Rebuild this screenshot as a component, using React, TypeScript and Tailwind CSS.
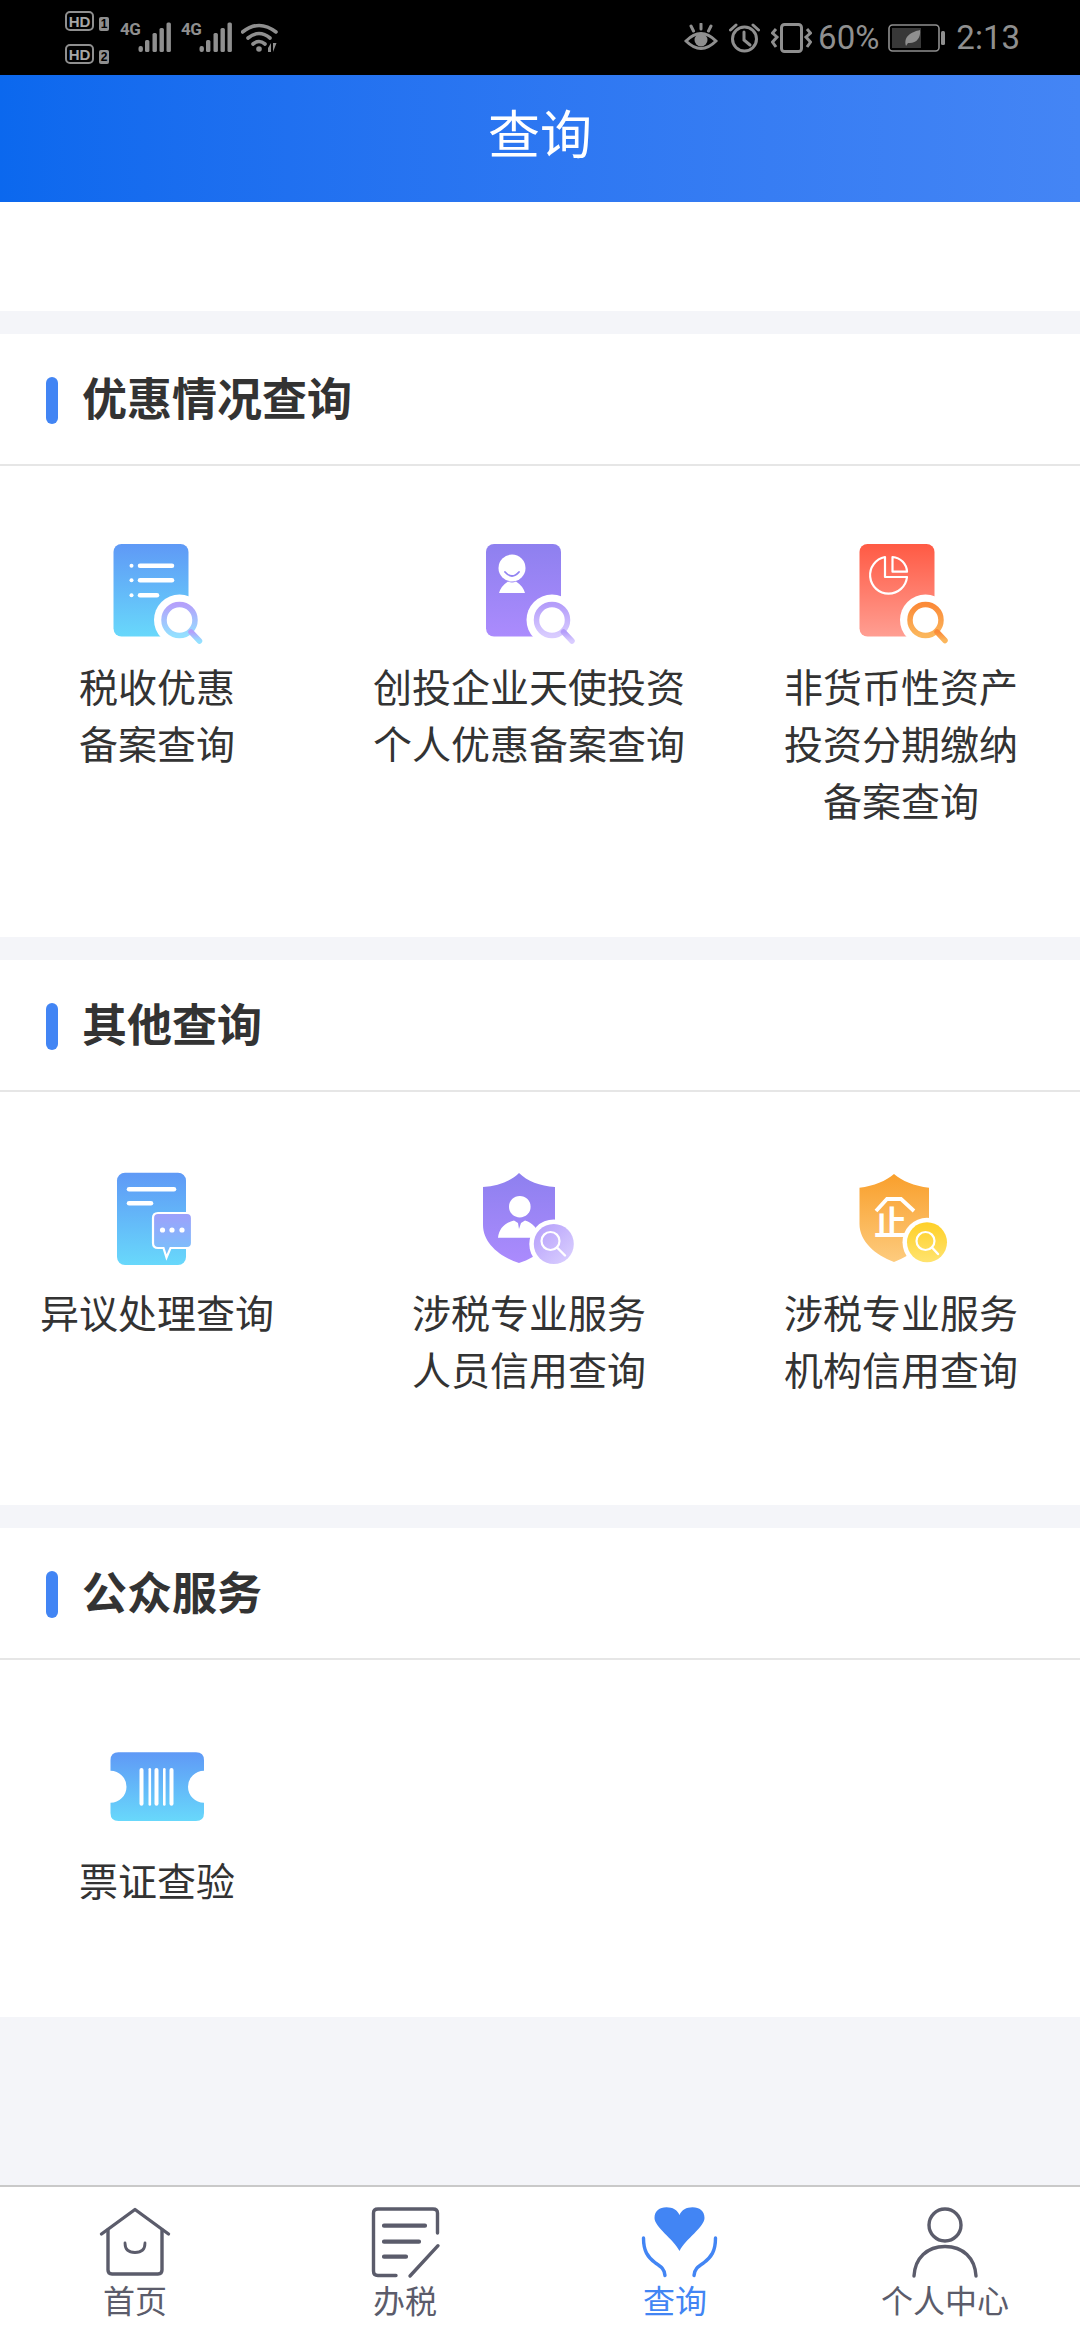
import React from "react";

const GRAY = "#8f8f8f";

function Grad({ id, from, to, x2 = 0, y2 = 1 }: { id: string; from: string; to: string; x2?: number; y2?: number }) {
  return (
    <linearGradient id={id} x1="0" y1="0" x2={x2} y2={y2}>
      <stop offset="0" stopColor={from} />
      <stop offset="1" stopColor={to} />
    </linearGradient>
  );
}

function Magnifier({ cx, cy, ex, ey, id }: { cx: number; cy: number; ex: number; ey: number; id: string }) {
  return (
    <g>
      <circle cx={cx} cy={cy} r="25.5" fill="#fff" />
      <circle cx={cx} cy={cy} r="15.5" fill="#fff" stroke={`url(#${id})`} strokeWidth="5.5" />
      <line x1={cx + 11.5} y1={cy + 12} x2={ex} y2={ey} stroke={`url(#${id})`} strokeWidth="5.5" strokeLinecap="round" />
    </g>
  );
}

function IconBase({ children }: { children: React.ReactNode }) {
  return (
    <svg width="105" height="105" viewBox="0 0 105 105" className="block">
      {children}
    </svg>
  );
}

function IconList() {
  return (
    <IconBase>
      <defs>
        <Grad id="a1" from="#5f99f6" to="#68d8fb" />
        <Grad id="a2" from="#b4a0fb" to="#94e0ff" />
      </defs>
      <rect x="8.5" y="1" width="75" height="92.5" rx="8" fill="url(#a1)" />
      <g stroke="#fff" strokeWidth="4.5" strokeLinecap="round">
        <line x1="35" y1="22.7" x2="67" y2="22.7" />
        <line x1="35" y1="37.3" x2="67" y2="37.3" />
        <line x1="35" y1="52.3" x2="52" y2="52.3" />
      </g>
      <g fill="#fff">
        <circle cx="26.5" cy="22.7" r="2" />
        <circle cx="26.5" cy="37.3" r="2" />
        <circle cx="26.5" cy="52.3" r="2" />
      </g>
      <Magnifier cx={74.5} cy={77} ex={94.5} ey={98} id="a2" />
    </IconBase>
  );
}

function IconPerson() {
  return (
    <IconBase>
      <defs>
        <Grad id="b1" from="#8e80ef" to="#ab8bfd" />
        <Grad id="b2" from="#b49dfa" to="#d9ccff" />
      </defs>
      <g transform="translate(1 0)">
        <rect x="8" y="1" width="75" height="92.5" rx="8" fill="url(#b1)" />
        <circle cx="34" cy="25" r="13.5" fill="#fff" />
        <path d="M27 29 Q34 37 41 29" fill="none" stroke="#9283f2" strokeWidth="1.8" strokeLinecap="round" />
        <path d="M21 50 Q23 43 30 38.5 Q34 40.5 38 38.5 Q45 43 47 50 Z" fill="#fff" />
        <Magnifier cx={74} cy={77} ex={94} ey={98} id="b2" />
      </g>
    </IconBase>
  );
}

function IconPie() {
  return (
    <IconBase>
      <defs>
        <Grad id="c1" from="#ff5a44" to="#ff9e92" />
        <Grad id="c2" from="#fb8a38" to="#fbb65c" />
      </defs>
      <rect x="10.5" y="1" width="75" height="92.5" rx="8" fill="url(#c1)" />
      <g fill="none" stroke="#fff" strokeWidth="2.2" strokeLinejoin="round">
        <path d="M36 14 A18.5 18.5 0 1 0 58 34 L36 34 Z" />
        <path d="M43.5 14 A15.5 15.5 0 0 1 58 28.7 L43.5 28.7 Z" />
      </g>
      <Magnifier cx={76.5} cy={77} ex={96} ey={97.5} id="c2" />
    </IconBase>
  );
}

function IconChat() {
  return (
    <IconBase>
      <defs>
        <Grad id="d1" from="#5f99f6" to="#68d8fb" />
        <Grad id="d2" from="#9e9ffb" to="#74c5fb" />
      </defs>
      <rect x="12" y="3.7" width="69" height="92.3" rx="8" fill="url(#d1)" />
      <g stroke="#fff" strokeWidth="4.5" strokeLinecap="round">
        <line x1="24" y1="20.3" x2="69" y2="20.3" />
        <line x1="24" y1="34.3" x2="46" y2="34.3" />
      </g>
      <path
        d="M53 44 H82 Q87 44 87 49 V74 Q87 79 82 79 H65.5 L61.5 88.5 L58.5 79 H53 Q48 79 48 74 V49 Q48 44 53 44 Z"
        fill="url(#d2)"
        stroke="#fff"
        strokeWidth="2.2"
      />
      <g fill="#fff">
        <circle cx="57.5" cy="61" r="2.6" />
        <circle cx="67" cy="61" r="2.6" />
        <circle cx="77" cy="61" r="2.6" />
      </g>
    </IconBase>
  );
}

function IconShieldPerson() {
  return (
    <IconBase>
      <defs>
        <Grad id="e1" from="#8e80ef" to="#ab8bfd" />
        <Grad id="e2" from="#b49dfa" to="#dcd2ff" x2={1} />
      </defs>
      <g transform="translate(1 0)">
        <path d="M41 4 C33 12 20 17 5 18 L5 56 C5 74 22 88 41 94 C60 88 77 74 77 56 L77 18 C62 17 49 12 41 4 Z" fill="url(#e1)" />
        <circle cx="41.8" cy="37.7" r="10.8" fill="#fff" />
        <path d="M20 68.7 C21 60 26 54 36 51.5 L40 54 L41 60 L43 54 L47 51.5 C55 54 60 60 62 68.7 Z" fill="#fff" />
        <circle cx="75.8" cy="75" r="24.5" fill="#fff" />
        <circle cx="75.8" cy="75" r="20" fill="url(#e2)" />
        <circle cx="72.5" cy="72" r="9" fill="none" stroke="#fff" strokeWidth="2.2" />
        <line x1="79" y1="78.5" x2="87" y2="86.5" stroke="#fff" strokeWidth="2.4" strokeLinecap="round" />
      </g>
    </IconBase>
  );
}

function IconShieldOrg() {
  return (
    <IconBase>
      <defs>
        <Grad id="f1" from="#f99f2c" to="#fdcb7e" />
        <Grad id="f2" from="#ffd027" to="#ffe36f" />
      </defs>
      <path d="M45 5 C37 12 25 17 10.5 18.7 L10.5 55 C10.5 72 26 86 45 93 C64 86 80 72 80 55 L80 18.7 C65 17 53 12 45 5 Z" fill="url(#f1)" />
      <polyline points="27,42 38,30 52,30 65,42" fill="none" stroke="#fff" strokeWidth="3.8" />
      <text
        x="41.5"
        y="66"
        textAnchor="middle"
        fontSize="33"
        fontWeight="700"
        fill="#fff"
        fontFamily="'Noto Sans CJK SC', sans-serif"
      >
        止
      </text>
      <circle cx="78" cy="73.3" r="24.5" fill="#fff" />
      <circle cx="78" cy="73.3" r="20" fill="url(#f2)" />
      <circle cx="76.5" cy="72" r="9" fill="none" stroke="#fff" strokeWidth="2.2" />
      <line x1="83" y1="78.5" x2="89" y2="85" stroke="#fff" strokeWidth="2.4" strokeLinecap="round" />
    </IconBase>
  );
}

function IconTicket() {
  return (
    <IconBase>
      <defs>
        <Grad id="g1" from="#5f99f6" to="#68d8fb" />
      </defs>
      <path
        d="M13.5 15.3 H91 Q99 15.3 99 23.3 V33.7 A16 16 0 0 0 99 65.7 V76 Q99 84 91 84 H13.5 Q5.5 84 5.5 76 V65.7 A16 16 0 0 0 5.5 33.7 V23.3 Q5.5 15.3 13.5 15.3 Z"
        fill="url(#g1)"
      />
      <g fill="#fff">
        <rect x="34.5" y="31" width="4" height="37.7" rx="2" />
        <rect x="43.5" y="31" width="2.6" height="37.7" rx="1.3" />
        <rect x="49.5" y="31" width="4" height="37.7" rx="2" />
        <rect x="58" y="31" width="2.6" height="37.7" rx="1.3" />
        <rect x="64.5" y="31" width="4" height="37.7" rx="2" />
      </g>
    </IconBase>
  );
}

function Item({ icon, lines }: { icon: React.ReactNode; lines: string[] }) {
  return (
    <div className="flex flex-col items-center">
      <div className="mb-[9px]">{icon}</div>
      <div className="text-center text-[39px] leading-[57px] text-[#333333] whitespace-nowrap">
        {lines.map((l) => (
          <div key={l}>{l}</div>
        ))}
      </div>
    </div>
  );
}

function Section({ title, pb, children }: { title: string; pb: string; children: React.ReactNode }) {
  return (
    <section className={`bg-white mt-[23px] ${pb}`}>
      <div className="h-[132px] border-b-2 border-[#e6e6e6] flex items-center pl-[46px] pt-[3px]">
        <div className="w-[12px] h-[47px] rounded-full bg-[#4285f4] mr-[24px]" />
        <div className="text-[45px] font-bold text-[#333333] leading-none -mt-[9px]">{title}</div>
      </div>
      <div className="grid grid-cols-[repeat(3,314px)] gap-x-[58px] pt-[77px]">{children}</div>
    </section>
  );
}

function Signal() {
  return (
    <svg width="34" height="31" viewBox="0 0 34 31" className="block">
      <g fill={GRAY}>
        <rect x="0.5" y="24" width="4.4" height="6" rx="2" />
        <rect x="7" y="18" width="4.4" height="12" rx="1.5" />
        <rect x="14.5" y="11" width="4.4" height="19" rx="1.5" />
        <rect x="21.5" y="6" width="4.4" height="24" rx="1.5" />
        <rect x="28.5" y="0.5" width="4.4" height="29.5" rx="1.5" />
      </g>
    </svg>
  );
}

function HdRow({ n }: { n: string }) {
  return (
    <div className="flex items-end gap-[5px]">
      <div className="w-[29px] h-[20px] rounded-[5px] border-[2.5px] border-[#8f8f8f] flex items-center justify-center text-[15px] leading-none font-bold text-[#a6a6a6] font-['Liberation_Sans',sans-serif]">
        HD
      </div>
      <div className="w-[10px] h-[14px] rounded-[2px] bg-[#8f8f8f] flex items-center justify-center text-[12px] leading-none font-bold text-black font-['Liberation_Sans',sans-serif]">
        {n}
      </div>
    </div>
  );
}

function FourG({ ml }: { ml: string }) {
  return (
    <div className={`${ml} w-[18px] mt-[21px] text-[17px] leading-[16px] font-bold text-[#8f8f8f] font-['Roboto',sans-serif] tracking-[-0.5px]`}>
      4G
    </div>
  );
}

function StatusBar() {
  return (
    <div className="h-[75px] bg-black flex justify-between shrink-0 text-[#8f8f8f] font-['Roboto',sans-serif]">
      <div className="flex items-start pl-[65px]">
        <div className="flex flex-col gap-[13px] pt-[11px] w-[45px]">
          <HdRow n="1" />
          <HdRow n="2" />
        </div>
        <FourG ml="ml-[10px]" />
        <div className="mt-[22px]">
          <Signal />
        </div>
        <FourG ml="ml-[9px]" />
        <div className="mt-[22px]">
          <Signal />
        </div>
        <svg width="38" height="31" viewBox="0 0 38 31" className="block ml-[8px] mt-[22px]">
          <g fill="none" stroke={GRAY} strokeWidth="3.6" strokeLinecap="round">
            <path d="M1.5 10 Q18 -3 35 10" />
            <path d="M7 16 Q18 7 29 16" />
            <path d="M12 22 Q18 17 24 22" />
          </g>
          <circle cx="18" cy="27" r="2.8" fill={GRAY} />
          <path d="M27 26 L30 21 V30 H27 Z M32 21 H35.5 L32 30 Z" fill={GRAY} />
        </svg>
      </div>
      <div className="flex items-center pr-[60px]">
        <svg width="34" height="30" viewBox="0 0 34 30" className="block">
          <g fill="none" stroke={GRAY} strokeWidth="3" strokeLinecap="round">
            <path d="M2 18 Q17 3 32 18 Q17 33 2 18 Z" />
            <path d="M17 1 V6 M7 3 L9.5 8 M27 3 L24.5 8" />
          </g>
          <circle cx="17" cy="17" r="6.5" fill={GRAY} />
        </svg>
        <svg width="31" height="30" viewBox="0 0 31 30" className="block ml-[11px]">
          <g fill="none" stroke={GRAY} strokeWidth="3" strokeLinecap="round">
            <circle cx="15.5" cy="16" r="12" />
            <path d="M15 9 V17 L21 22" />
            <path d="M1.5 7 L7 2 M29.5 7 L24 2" />
          </g>
        </svg>
        <svg width="41" height="30" viewBox="0 0 41 30" className="block ml-[11px]">
          <rect x="10.5" y="1.5" width="20" height="27" rx="3" fill="none" stroke={GRAY} strokeWidth="3" />
          <g fill="none" stroke={GRAY} strokeWidth="3">
            <path d="M5 6 L1.5 10 L6 14 L1.5 19 L5 24" />
            <path d="M36 6 L39.5 10 L35 14 L39.5 19 L36 24" />
          </g>
        </svg>
        <div className="ml-[6px] text-[33px] leading-none text-[#8f8f8f]">60%</div>
        <svg width="58" height="28" viewBox="0 0 58 28" className="block ml-[9px]">
          <rect x="1" y="1" width="50" height="26" rx="3.5" fill="none" stroke={GRAY} strokeWidth="1.6" />
          <rect x="4" y="4" width="29" height="20" fill="#383838" />
          <path d="M18 22 C15 12 24 8 32 6 C33 14 28 20 20 19 Z" fill={GRAY} />
          <rect x="53" y="7" width="4" height="14" rx="1.5" fill={GRAY} />
        </svg>
        <div className="ml-[10px] text-[33px] leading-none text-[#8f8f8f]">2:13</div>
      </div>
    </div>
  );
}

function TabIcon({ children }: { children: React.ReactNode }) {
  return (
    <svg width="88" height="73" viewBox="0 0 88 73" className="block overflow-visible">
      {children}
    </svg>
  );
}

const TAB = "#5b5c6b";

function TabBar() {
  return (
    <div className="h-[155px] shrink-0 bg-white border-t-2 border-[#c9c9c9] grid grid-cols-4 pt-[19px]">
      <div className="flex flex-col items-center text-[#5b5c6b]">
        <TabIcon>
          <g fill="none" stroke={TAB} strokeWidth="3.4" strokeLinecap="round" strokeLinejoin="round">
            <path d="M10.5 28 L44 3.5 L77.5 28" />
            <path d="M17 24 V64 Q17 68 21 68 H67 Q71 68 71 64 V24" />
            <path d="M34 37 Q34 46.5 44 46.5 Q54 46.5 54 37" strokeWidth="2.8" />
          </g>
        </TabIcon>
        <div className="text-[32px] leading-[40px]">首页</div>
      </div>
      <div className="flex flex-col items-center text-[#5b5c6b]">
        <TabIcon>
          <g fill="none" stroke={TAB} strokeWidth="3.4" strokeLinecap="round" strokeLinejoin="round">
            <path d="M35 69.5 H17 Q12.5 69.5 12.5 65 V7 Q12.5 3 17 3 H72 Q76.5 3 76.5 7 V27" />
            <path d="M23 19.7 H64 M23 35.7 H58 M23 50.7 H45" strokeWidth="4.2" />
            <path d="M77 39.7 L49 70" />
          </g>
        </TabIcon>
        <div className="text-[32px] leading-[40px]">办税</div>
      </div>
      <div className="flex flex-col items-center text-[#4285f4]">
        <TabIcon>
          <g transform="translate(1.5 0)">
            <path
              d="M47 45 C41 33 22 21 22 12 C22 5 27 1.3 34 1.3 C40 1.3 45 4 47 9 C49 4 54 1.3 60 1.3 C67 1.3 72 5 72 12 C72 21 53 33 47 45 Z"
              fill="#4285f4"
            />
            <g fill="none" stroke="#4285f4" strokeWidth="3.4" strokeLinecap="round">
              <path d="M11 32 C11 45 15 51 23 57 C29 61 32 63 32.5 69.5" />
              <path d="M83 32 C83 45 79 51 71 57 C65 61 62 63 61.5 69.5" />
            </g>
          </g>
        </TabIcon>
        <div className="text-[32px] leading-[40px]">查询</div>
      </div>
      <div className="flex flex-col items-center text-[#5b5c6b]">
        <TabIcon>
          <g fill="none" stroke={TAB} strokeWidth="3.4" strokeLinecap="round">
            <circle cx="44" cy="19" r="16" />
            <path d="M13 70 C14 52 26 40.5 44 40.5 C62 40.5 74 52 75 70" />
          </g>
        </TabIcon>
        <div className="text-[32px] leading-[40px]">个人中心</div>
      </div>
    </div>
  );
}

export default function App() {
  return (
    <div className="w-[1080px] h-[2340px] flex flex-col bg-[#f4f5f9] overflow-hidden font-['Noto_Sans_CJK_SC','Liberation_Sans',sans-serif]">
      <StatusBar />
      <header className="h-[127px] shrink-0 bg-gradient-to-r from-[#0b68ee] to-[#4485f5] flex items-center justify-center text-white text-[52px] leading-none pb-[14px] shadow-[0_2px_3px_rgba(66,133,244,0.2)]">
        查询
      </header>
      <main className="flex-1 min-h-0">
        <div className="h-[109px] bg-white" />
        <Section title="优惠情况查询" pb="pb-[109px]">
          <Item icon={<IconList />} lines={["税收优惠", "备案查询"]} />
          <Item icon={<IconPerson />} lines={["创投企业天使投资", "个人优惠备案查询"]} />
          <Item icon={<IconPie />} lines={["非货币性资产", "投资分期缴纳", "备案查询"]} />
        </Section>
        <Section title="其他查询" pb="pb-[108px]">
          <Item icon={<IconChat />} lines={["异议处理查询"]} />
          <Item icon={<IconShieldPerson />} lines={["涉税专业服务", "人员信用查询"]} />
          <Item icon={<IconShieldOrg />} lines={["涉税专业服务", "机构信用查询"]} />
        </Section>
        <Section title="公众服务" pb="pb-[109px]">
          <Item icon={<IconTicket />} lines={["票证查验"]} />
        </Section>
      </main>
      <TabBar />
    </div>
  );
}
